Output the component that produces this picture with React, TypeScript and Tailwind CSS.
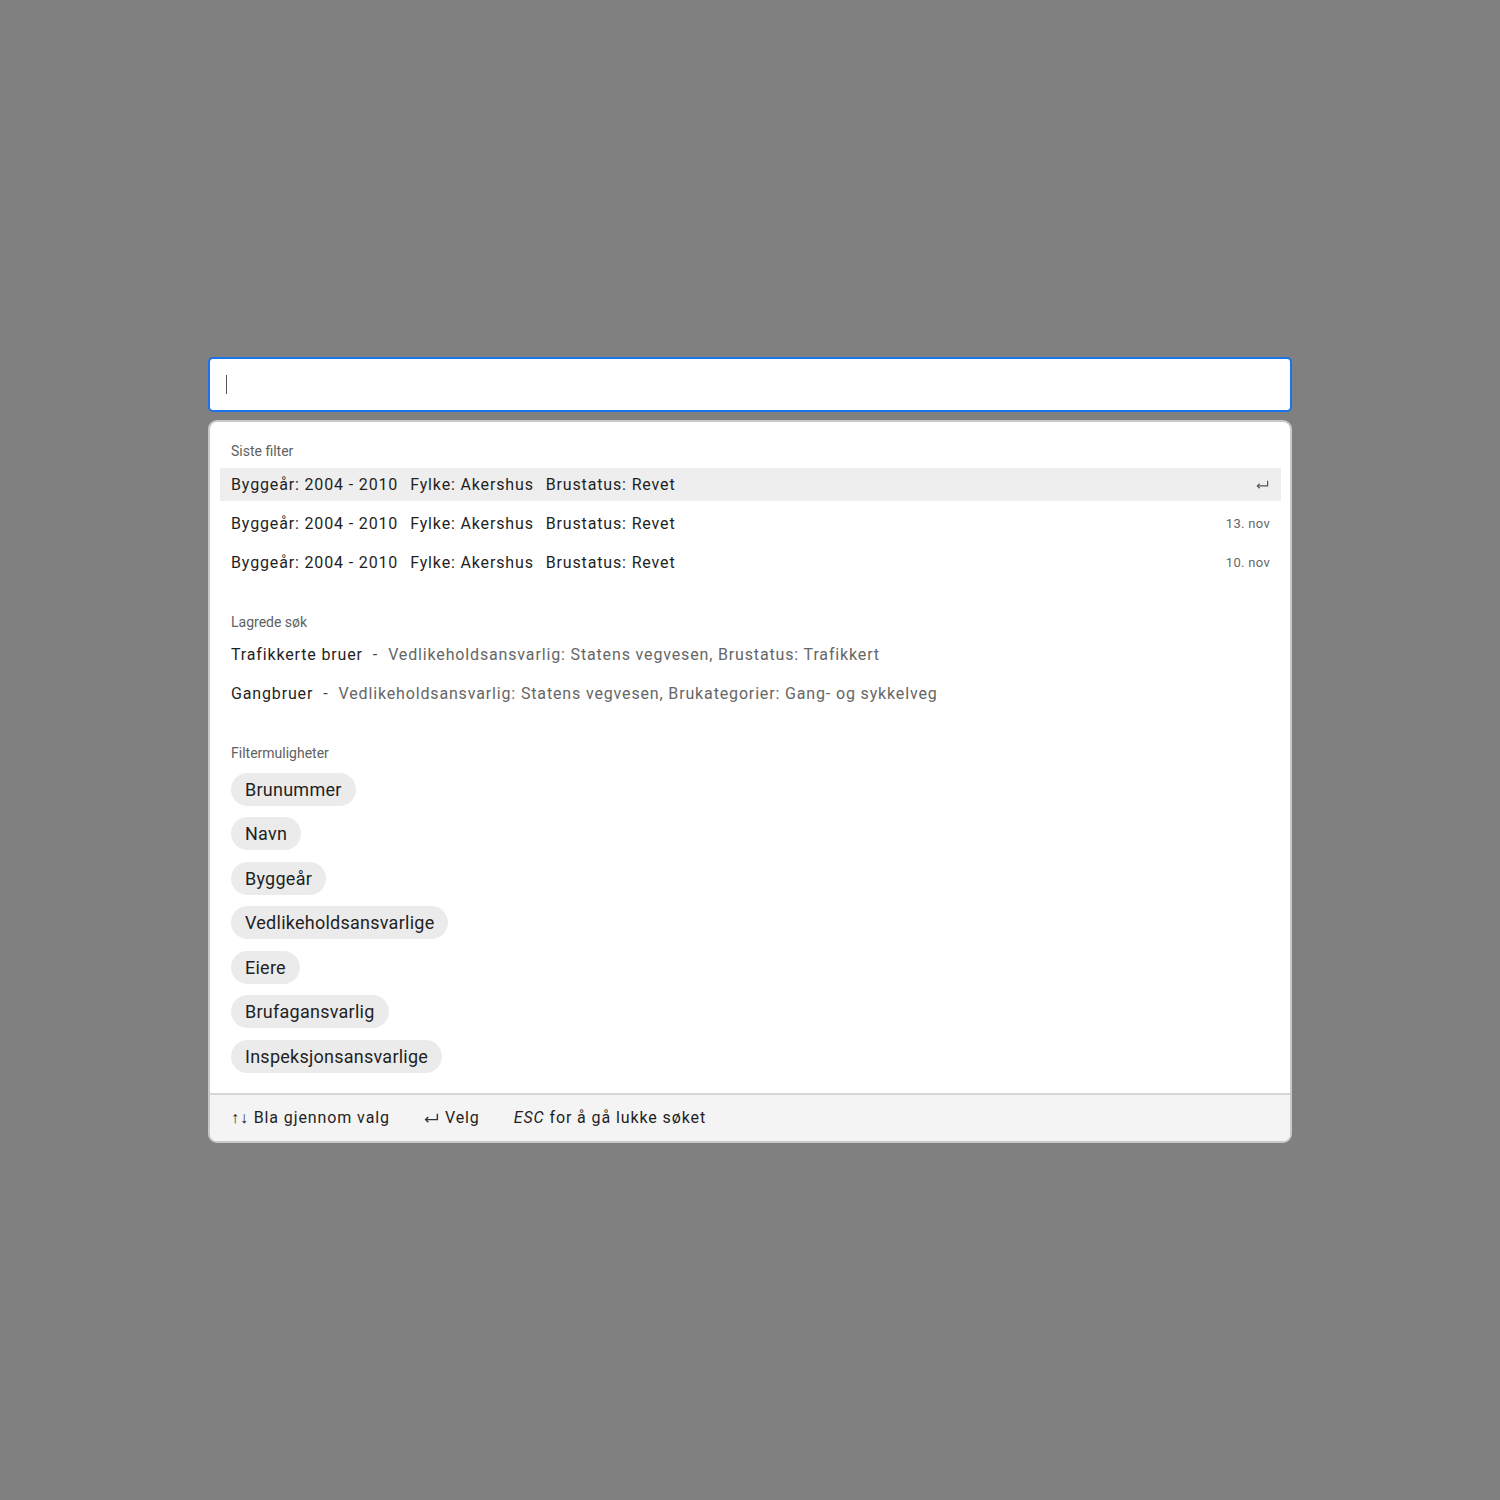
import React from 'react';

interface RecentFilter {
  parts: string[];
  meta: string;
  active?: boolean;
}

interface SavedSearch {
  name: string;
  desc: string;
}

const recent: RecentFilter[] = [
  { parts: ['Byggeår: 2004 - 2010', 'Fylke: Akershus', 'Brustatus: Revet'], meta: '', active: true },
  { parts: ['Byggeår: 2004 - 2010', 'Fylke: Akershus', 'Brustatus: Revet'], meta: '13. nov' },
  { parts: ['Byggeår: 2004 - 2010', 'Fylke: Akershus', 'Brustatus: Revet'], meta: '10. nov' },
];

const saved: SavedSearch[] = [
  { name: 'Trafikkerte bruer', desc: 'Vedlikeholdsansvarlig: Statens vegvesen, Brustatus: Trafikkert' },
  { name: 'Gangbruer', desc: 'Vedlikeholdsansvarlig: Statens vegvesen, Brukategorier: Gang- og sykkelveg' },
];

const options = [
  'Brunummer',
  'Navn',
  'Byggeår',
  'Vedlikeholdsansvarlige',
  'Eiere',
  'Brufagansvarlig',
  'Inspeksjonsansvarlige',
];

// return key glyph: arrow pointing left with a stem going up on the right
const EnterIcon: React.FC<{ className?: string }> = ({ className }) => (
  <svg viewBox="0 0 14 9" fill="none" stroke="currentColor" strokeWidth="1.3" className={className}>
    <path d="M12.5 0.5V6H1.5" />
    <path d="M4 3.5L1.5 6L4 8.5" />
  </svg>
);

const SectionLabel: React.FC<{ children: React.ReactNode }> = ({ children }) => (
  <div className="px-[21px] text-[14px] leading-5 text-[#616161]">{children}</div>
);

const App: React.FC = () => {
  return (
    <div
      className="min-h-[1500px] w-full bg-[#808080] pt-[357px]"
      style={{ fontFamily: 'Roboto, "Noto Sans", sans-serif' }}
    >
      <div className="mx-auto w-[1084px]">
        {/* search field */}
        <div className="flex h-[55px] items-center rounded-[5px] border-2 border-[#1a73e8] bg-white px-4">
          <div className="h-[19px] w-px bg-[#555]"></div>
        </div>

        {/* dropdown */}
        <div className="mt-2 overflow-hidden rounded-[9px] border-2 border-[#c9c9c9] bg-white">
          <div className="pt-[19px]">
            <SectionLabel>Siste filter</SectionLabel>
            <div className="mt-[7px] flex flex-col gap-[6px] pl-[10px] pr-[9px]">
              {recent.map((r, i) => (
                <div
                  key={i}
                  className={`flex h-[33px] items-center justify-between px-[11px] ${r.active ? 'bg-[#eeeeee]' : ''}`}
                >
                  <div className="flex gap-3 text-[16px] tracking-[0.85px] text-[#1f1f1f]">
                    {r.parts.map((p, j) => (
                      <span key={j}>{p}</span>
                    ))}
                  </div>
                  {r.active ? (
                    <EnterIcon className="mr-[1px] h-[9px] w-[13px] text-[#555]" />
                  ) : (
                    <span className="text-[13px] tracking-[0.3px] text-[#666]">{r.meta}</span>
                  )}
                </div>
              ))}
            </div>
          </div>

          <div className="pt-[32.5px]">
            <SectionLabel>Lagrede søk</SectionLabel>
            <div className="mt-[7px] flex flex-col gap-[6px] px-[10px]">
              {saved.map((s, i) => (
                <div key={i} className="flex h-[33px] items-center px-[11px] text-[16px] tracking-[0.85px]">
                  <span className="text-[#1f1f1f]">{s.name}</span>
                  <span className="mx-[10px] text-[#444]">-</span>
                  <span className="text-[#666]">{s.desc}</span>
                </div>
              ))}
            </div>
          </div>

          <div className="pt-[32px] pb-[20px]">
            <SectionLabel>Filtermuligheter</SectionLabel>
            <div className="mt-[10px] flex flex-col items-start gap-[11.5px] px-[21px]">
              {options.map(o => (
                <span
                  key={o}
                  className="flex h-[33px] items-center rounded-full bg-[#ebebeb] px-[14px] text-[18px] tracking-[0.25px] text-[#1f1f1f]"
                >
                  {o}
                </span>
              ))}
            </div>
          </div>

          {/* footer */}
          <div className="flex h-[48px] items-center gap-[34px] border-t-2 border-[#d6d6d6] bg-[#f4f4f4] px-[21px] pt-[1px] text-[16px] tracking-[0.9px] text-[#1f1f1f]">
            <span>↑↓ Bla gjennom valg</span>
            <span className="flex items-center gap-[6px]">
              <EnterIcon className="h-[10px] w-[15px] text-[#333]" />
              Velg
            </span>
            <span>
              <i>ESC</i> for å gå lukke søket
            </span>
          </div>
        </div>
      </div>
    </div>
  );
};

export default App;
